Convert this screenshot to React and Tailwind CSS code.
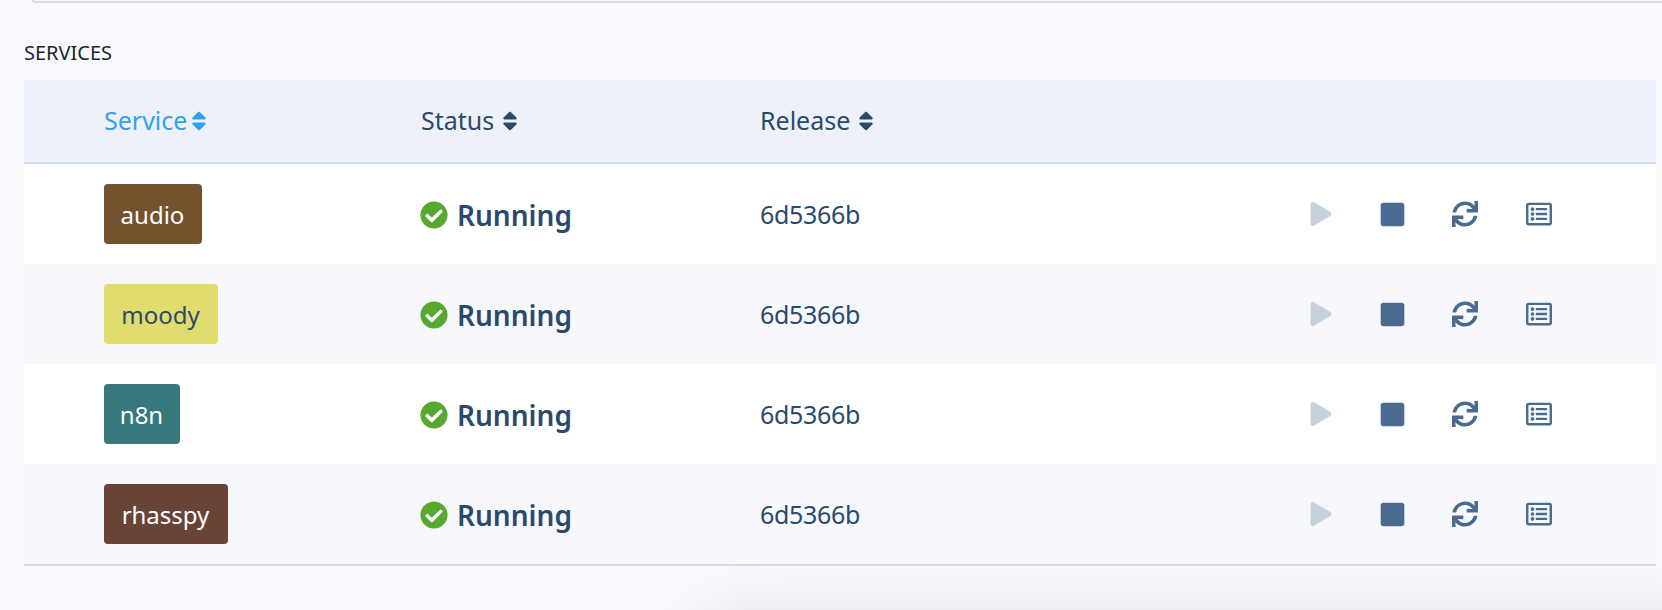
import React from 'react';
import { FaPlay, FaStop, FaSync, FaRegListAlt, FaCheckCircle, FaSort } from 'react-icons/fa';

const services = [
  { name: 'audio', badge: 'bg-[#75522e] text-white', width: 'w-[98px]' },
  { name: 'moody', badge: 'bg-[#e0dd6e] text-[#2c4a6b]', width: 'w-[114px]' },
  { name: 'n8n', badge: 'bg-[#37787c] text-white', width: 'w-[76px]' },
  { name: 'rhasspy', badge: 'bg-[#694436] text-white', width: 'w-[124px]' },
];

const ServiceRow = ({ service, striped }) => (
  <div className={`grid grid-cols-[317px_339px_1fr] items-center h-[100px] pl-[80px] ${striped ? 'bg-[#f6f8fc]' : 'bg-white'}`}>
    <div>
      <span className={`flex items-center justify-center h-[60px] pt-px pr-px rounded-[4px] text-[24px] ${service.width} ${service.badge}`}>
        {service.name}
      </span>
    </div>
    <div className="flex items-center pt-px">
      <FaCheckCircle className="text-[#57a82e] text-[28px] mr-[9px] -ml-px" />
      <span className="font-semibold text-[28px]">Running</span>
    </div>
    <div className="flex items-center justify-between pr-[104px]">
      <span className="text-[25px] tracking-[-0.3px] pt-px">6d5366b</span>
      <div className="flex items-center">
        <FaPlay className="text-[#c6d1de] text-[24px] mr-[46px]" />
        <FaStop className="text-[#4a6b8f] text-[27px] mr-[46px]" />
        <FaSync className="text-[#4a6b8f] text-[26px] mr-[48px]" />
        <FaRegListAlt className="text-[#4a6b8f] text-[26px]" />
      </div>
    </div>
  </div>
);

export default function App() {
  return (
    <div className="relative h-[610px] overflow-hidden bg-[#f7f9fd] text-[#2a4a6b] font-['Noto_Sans',sans-serif]">
      {/* card that sits above, only its bottom edge shows */}
      <div className="h-[3px] ml-[32px] border-b-[2px] border-l-[2px] border-[#d5dcec] rounded-bl-[12px]" />

      <h2 className="mt-[40px] mb-[18px] ml-[24px] h-[19px] flex items-center text-[20px] text-[#22252b]">SERVICES</h2>

      <div className="mr-[6px] ml-[24px]">
        <div className="grid grid-cols-[317px_339px_1fr] items-center h-[84px] pl-[81px] bg-[#eef1fa] border-b-[2px] border-[#d5dcec] text-[25px]">
          <div className="flex items-center text-[#2ea3ee] -ml-px">
            Service
            <FaSort className="text-[24px]" />
          </div>
          <div className="flex items-center -ml-px">
            Status
            <FaSort className="ml-[4px] text-[24px]" />
          </div>
          <div className="flex items-center -ml-px">
            Release
            <FaSort className="ml-[4px] text-[24px]" />
          </div>
        </div>

        {services.map((service, i) => (
          <ServiceRow key={service.name} service={service} striped={i % 2 === 1} />
        ))}

        <div className="border-t-[2px] border-[#d5dcec]" />
      </div>

      {/* shadow of a panel below the fold */}
      <div className="absolute left-[720px] right-[-60px] top-[640px] h-[60px] rounded-[30px] bg-[#e6e7ec] shadow-[0_0_60px_30px_rgba(0,0,0,0.09)]" />
    </div>
  );
}
